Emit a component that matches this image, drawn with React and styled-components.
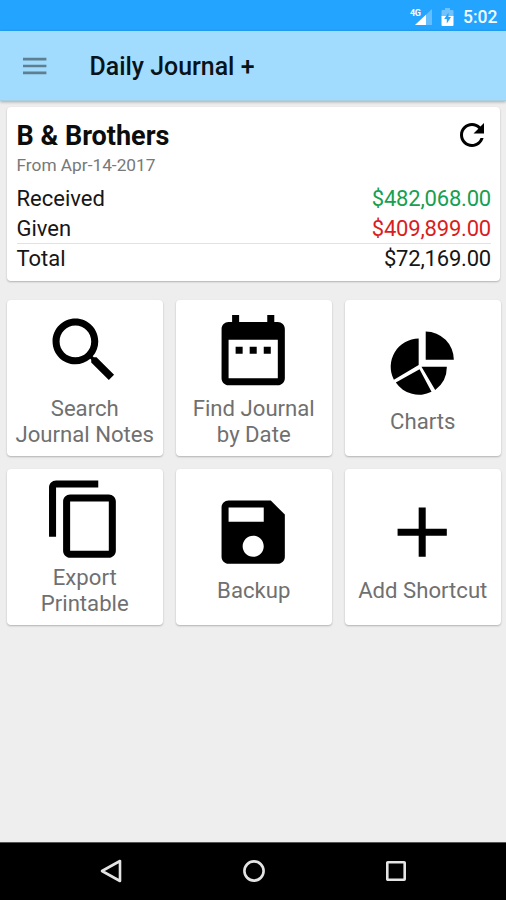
import React from "react";
import styled, { createGlobalStyle } from "styled-components";

const GlobalStyle = createGlobalStyle`
  * { box-sizing: border-box; }
  body { margin: 0; background: #eeeeee; font-family: Roboto, "Noto Sans", sans-serif; }
`;

const Screen = styled.div`
  width: 506px;
  height: 900px;
  display: flex;
  flex-direction: column;
  overflow: hidden;
  background: #eeeeee;
`;

const StatusBar = styled.div`
  height: 31px;
  flex: none;
  display: flex;
  align-items: center;
  justify-content: flex-end;
  padding: 2px 9px 0 0;
  background: #23a4ff;
  color: #f2faff;
`;

const Signal = styled.svg`
  width: 22px;
  height: 18px;
  margin-right: 9px;
`;

const Battery = styled.svg`
  width: 13px;
  height: 18px;
  margin-right: 9px;
`;

const Clock = styled.span`
  width: 34px;
  font-size: 17.5px;
  line-height: 20px;
  font-weight: 500;
  white-space: nowrap;
`;

const Toolbar = styled.header`
  height: 70px;
  flex: none;
  display: flex;
  align-items: center;
  padding: 0 0 0 23px;
  background: #a1dcff;
  border-bottom: 1px solid #a9cfdc;
  box-shadow: 0 1px 3px rgba(0, 0, 0, 0.3);
`;

const MenuIcon = styled.svg`
  width: 24px;
  height: 18px;
  margin-right: 42.5px;
`;

const Title = styled.h1`
  margin: 3px 0 0;
  font-size: 24.9px;
  line-height: 30px;
  font-weight: 500;
  color: #08131a;
`;

const Content = styled.main`
  flex: 1;
  padding: 6px 6px 0 7px;
`;

const Card = styled.section`
  background: #fff;
  border-radius: 4px;
  box-shadow: 0 1px 2px rgba(0, 0, 0, 0.26);
`;

const Summary = styled(Card)`
  height: 174px;
  padding: 14px 9px 0 9.5px;
`;

const SummaryHead = styled.div`
  display: flex;
  justify-content: space-between;
  height: 63px;
`;

const Name = styled.h2`
  margin: 0;
  font-size: 27px;
  line-height: 31px;
  font-weight: 700;
  color: #0c0c0c;
`;

const Since = styled.p`
  margin: 3px 0 0;
  font-size: 17.3px;
  line-height: 20px;
  color: #787878;
`;

const RefreshIcon = styled.svg`
  width: 36px;
  height: 36px;
  margin: -4px 1px 0 0;
`;

const Row = styled.div`
  display: flex;
  justify-content: space-between;
  height: ${(p) => (p.$total ? 30 : 29.5)}px;
  border-top: ${(p) => (p.$total ? "1px solid #e2e2e2" : "0")};
  font-size: 22px;
  line-height: 29px;
  color: #161616;
`;

const Amount = styled.span`
  letter-spacing: -0.2px;
  color: ${(p) => p.$color};
`;

const Grid = styled.div`
  display: grid;
  grid-template-columns: repeat(3, 155.5px);
  grid-auto-rows: 156px;
  column-gap: 13.5px;
  row-gap: 13px;
  margin-top: 19px;
`;

const Tile = styled(Card)`
  display: flex;
  flex-direction: column;
  align-items: center;
  justify-content: center;
  padding-bottom: 1px;
`;

const TileIcon = styled.svg`
  width: 84.4px;
  height: 84.4px;
  margin-right: 1px;
  flex: none;
  fill: #000;
`;

const TileLabel = styled.div`
  margin-top: 2.4px;
  font-size: 22.15px;
  line-height: 26px;
  color: #707070;
  text-align: center;
  white-space: pre-line;
`;

const NavBar = styled.nav`
  height: 58px;
  flex: none;
  display: grid;
  grid-template-columns: repeat(3, 142px);
  justify-content: center;
  justify-items: center;
  align-items: center;
  padding-left: 2px;
  background: #000;
  border-top: 1px solid #555;
`;

const NavIcon = styled.svg`
  width: 26px;
  height: 26px;
  margin-bottom: 2px;
  fill: none;
  stroke: #e4e4e4;
  stroke-width: 2.6;
  stroke-linejoin: round;
`;

const tiles = [
  {
    label: "Search\nJournal Notes",
    d: "M15.5 14h-.79l-.28-.27C15.41 12.59 16 11.11 16 9.5 16 5.91 13.09 3 9.5 3S3 5.91 3 9.5 5.91 16 9.5 16c1.61 0 3.09-.59 4.23-1.57l.27.28v.79l5 4.99L20.49 19l-4.99-5zm-6 0C7.01 14 5 11.99 5 9.5S7.01 5 9.5 5 14 7.01 14 9.5 11.99 14 9.5 14z",
  },
  {
    label: "Find Journal\nby Date",
    d: "M9 11H7v2h2v-2zm4 0h-2v2h2v-2zm4 0h-2v2h2v-2zm2-7h-1V2h-2v2H8V2H6v2H5c-1.11 0-1.99.9-1.99 2L3 20c0 1.1.89 2 2 2h14c1.1 0 2-.9 2-2V6c0-1.1-.9-2-2-2zm0 16H5V9h14v11z",
  },
  {
    label: "Charts",
    d: "M11 5v7.5L3.95 16.7A8 8 0 0 1 11 5zM11.25 13.75l3.4 6.4A8 8 0 0 1 4.5 17.5zM11.8 13H19a8 8 0 0 1-3.3 6.6zM13 3a8 8 0 0 1 8 8h-8z",
  },
  {
    label: "Export\nPrintable",
    d: "M16 1H4c-1.1 0-2 .9-2 2v14h2V3h12V1zm3 4H8c-1.1 0-2 .9-2 2v14c0 1.1.9 2 2 2h11c1.1 0 2-.9 2-2V7c0-1.1-.9-2-2-2zm0 16H8V7h11v14z",
  },
  {
    label: "Backup",
    d: "M17 3H5c-1.11 0-2 .9-2 2v14c0 1.1.89 2 2 2h14c1.1 0 2-.9 2-2V7l-4-4zm-5 16c-1.66 0-3-1.34-3-3s1.34-3 3-3 3 1.34 3 3-1.34 3-3 3zm3-10H5V5h10v4z",
  },
  { label: "Add Shortcut", d: "M19 13h-6v6h-2v-6H5v-2h6V5h2v6h6v2z" },
];

export default function App() {
  return (
    <>
      <GlobalStyle />
      <Screen>
        <StatusBar>
          <Signal viewBox="0 0 22 18">
            <path d="M22 1v16H5z" fill="#fff" opacity=".3" />
            <path d="M16 6.7V17H5z" fill="#fff" />
            <text x="0" y="7.5" fontSize="9" fontWeight="700" fill="#fff" textLength="11">4G</text>
          </Signal>
          <Battery viewBox="0 0 13 18">
            <path d="M4 0h5v2h2.5q1 0 1 1v6H.5V3q0-1 1-1H4z" fill="#fff" opacity=".35" />
            <path d="M.5 8h12v9q0 1-1 1h-10q-1 0-1-1z" fill="#fff" />
            <path d="M7.5 4.5 3.2 11h2.6v4.5L10 9H7.5z" fill="#23a4ff" />
          </Battery>
          <Clock>5:02</Clock>
        </StatusBar>
        <Toolbar>
          <MenuIcon viewBox="0 0 24 18">
            <path d="M0 2.2h23.4M0 9h23.4M0 15.8h23.4" stroke="#5d7f91" strokeWidth="2.7" />
          </MenuIcon>
          <Title>Daily Journal +</Title>
        </Toolbar>
        <Content>
          <Summary>
            <SummaryHead>
              <div>
                <Name>B &amp; Brothers</Name>
                <Since>From Apr-14-2017</Since>
              </div>
              <RefreshIcon viewBox="0 0 24 24">
                <path d="M17.65 6.35C16.2 4.9 14.21 4 12 4c-4.42 0-7.99 3.58-7.99 8s3.57 8 7.99 8c3.73 0 6.84-2.55 7.73-6h-2.08c-.82 2.33-3.04 4-5.65 4-3.31 0-6-2.69-6-6s2.69-6 6-6c1.66 0 3.14.69 4.22 1.78L13 11h7V4l-2.35 2.35z" />
              </RefreshIcon>
            </SummaryHead>
            <Row>
              <span>Received</span>
              <Amount $color="#16a050">$482,068.00</Amount>
            </Row>
            <Row>
              <span>Given</span>
              <Amount $color="#d81e1e">$409,899.00</Amount>
            </Row>
            <Row $total>
              <span>Total</span>
              <Amount $color="#161616">$72,169.00</Amount>
            </Row>
          </Summary>
          <Grid>
            {tiles.map((t) => (
              <Tile key={t.label}>
                <TileIcon viewBox="0 0 24 24">
                  <path d={t.d} />
                </TileIcon>
                <TileLabel>{t.label}</TileLabel>
              </Tile>
            ))}
          </Grid>
        </Content>
        <NavBar>
          <NavIcon viewBox="0 0 26 26">
            <path d="M21 3v20L3 13z" />
          </NavIcon>
          <NavIcon viewBox="0 0 26 26">
            <circle cx="13" cy="13" r="9.6" />
          </NavIcon>
          <NavIcon viewBox="0 0 26 26">
            <rect x="4.3" y="4.3" width="17.4" height="17.4" rx="0.5" />
          </NavIcon>
        </NavBar>
      </Screen>
    </>
  );
}
